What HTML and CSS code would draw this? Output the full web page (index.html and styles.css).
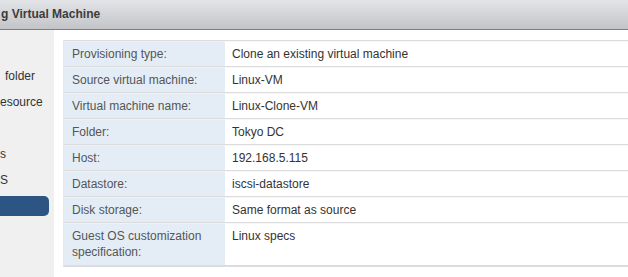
FILE: index.html
```html
<!DOCTYPE html>
<html>
<head>
<meta charset="utf-8">
<link rel="stylesheet" href="styles.css">
</head>
<body>
<div class="header">g Virtual Machine</div>
<div class="main">
  <ul class="steps">
    <li class="step"></li>
    <li class="step step-indent">folder</li>
    <li class="step">esource</li>
    <li class="step"></li>
    <li class="step">s</li>
    <li class="step">S</li>
    <li class="step active"></li>
  </ul>
  <div class="content">
    <div class="summary">
      <div class="row"><div class="label">Provisioning type:</div><div class="value">Clone an existing virtual machine</div></div>
      <div class="row"><div class="label">Source virtual machine:</div><div class="value">Linux-VM</div></div>
      <div class="row"><div class="label">Virtual machine name:</div><div class="value">Linux-Clone-VM</div></div>
      <div class="row"><div class="label">Folder:</div><div class="value">Tokyo DC</div></div>
      <div class="row"><div class="label">Host:</div><div class="value">192.168.5.115</div></div>
      <div class="row"><div class="label">Datastore:</div><div class="value">iscsi-datastore</div></div>
      <div class="row"><div class="label">Disk storage:</div><div class="value">Same format as source</div></div>
      <div class="row row-last"><div class="label">Guest OS customization specification:</div><div class="value">Linux specs</div></div>
    </div>
  </div>
</div>
</body>
</html>
```
FILE: styles.css
```css
html, body {
  margin: 0;
  padding: 0;
}
body {
  width: 628px;
  height: 277px;
  overflow: hidden;
  background: #ffffff;
  font-family: "Liberation Sans", Arial, sans-serif;
  font-size: 12px;
  color: #333333;
}
.header {
  height: 29px;
  line-height: 29px;
  border-bottom: 1px solid #7f7f7f;
  background: linear-gradient(to bottom, #e3e4e7 0%, #d3d4d7 50%, #c3c4c7 100%);
  font-weight: bold;
  font-size: 12px;
  color: #3c3c3c;
  padding-left: 1px;
  white-space: nowrap;
}
.main {
  display: flex;
  height: 247px;
}
.steps {
  list-style: none;
  margin: 0;
  padding: 10px 0 0 0;
  width: 54px;
  flex: none;
  background: #f0f0f0;
  overflow: hidden;
}
.step {
  height: 20px;
  line-height: 20px;
  margin: 0 0 6px 0;
  white-space: nowrap;
  color: #333333;
}
.step-indent {
  padding-left: 5px;
}
.step.active {
  width: 49px;
  background: #2c5584;
  border-radius: 0 5px 5px 0;
}
.content {
  flex: 1;
  padding: 10px 0 0 9px;
  overflow: hidden;
}
.summary {
  width: 600px;
  border-top: 1px solid #dcdcdc;
  border-left: 1px solid #e8e8e8;
  border-bottom: 2px solid #dcdcdc;
}
.row {
  display: grid;
  grid-template-columns: 161px 1fr;
  border-top: 1px solid #dcdcdc;
}
.row:first-child {
  border-top: none;
}
.label,
.value {
  padding: 5px 8px 4px 8px;
  line-height: 16px;
  box-shadow: inset 0 1px 0 #f7f7f7;
}
.label {
  background: #e4edf5;
  color: #555555;
  box-shadow: inset 0 1px 0 #eef3f8;
}
.value {
  padding-left: 7px;
  color: #333333;
}
.row-last .label,
.row-last .value {
  padding-bottom: 5px;
}
.row-last .label {
  padding-right: 20px;
}
```
